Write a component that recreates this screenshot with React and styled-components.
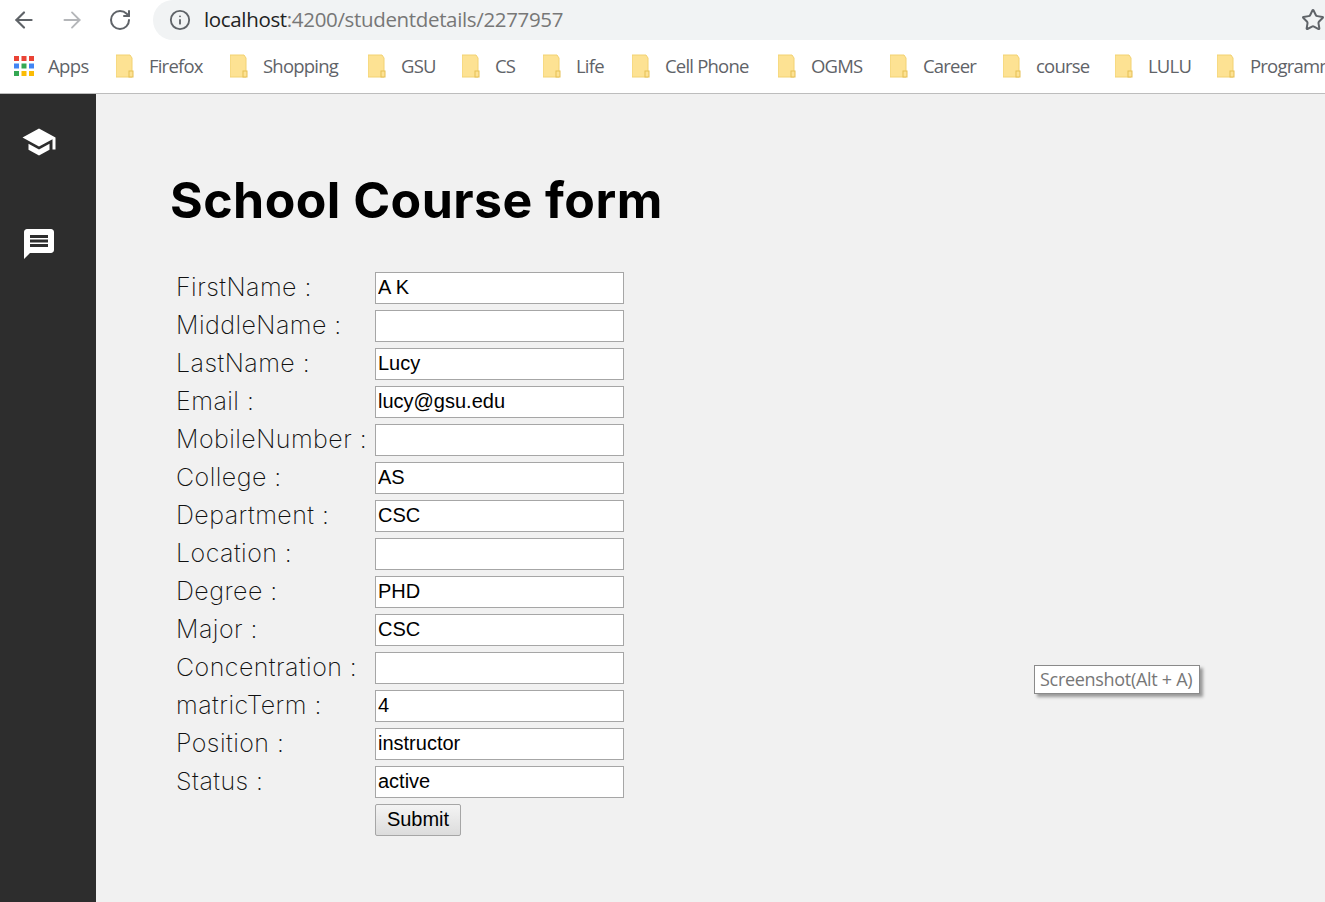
// Libs
import React from 'react';
import styled, { createGlobalStyle } from 'styled-components';
import { ArrowLeft, ArrowRight, RotateCw, Info, Star } from 'lucide-react';

// Styles
const GlobalStyle = createGlobalStyle`
  html, body {
    margin: 0;
    height: 100%;
    overflow: hidden;
    background: #f1f1f1;
  }
`;

const Page = styled.div`
  display: flex;
  flex-direction: column;
  height: 902px;
  overflow: hidden;
`;

const Toolbar = styled.div`
  display: flex;
  align-items: center;
  flex: none;
  height: 40px;
  padding-left: 11px;
  background: #fff;
`;

const NavButton = styled.div`
  display: flex;
  flex: none;
  width: 26px;
  justify-content: center;
  margin-right: 22px;
  color: ${(p) => p.$color};
`;

const AddressBar = styled.div`
  display: flex;
  align-items: center;
  flex: 1;
  height: 40px;
  margin-left: -2px;
  padding-left: 16px;
  border-radius: 20px 0 0 20px;
  background: #f1f3f4;
  color: #5f6368;
`;

const Url = styled.div`
  margin: 0 0 2px 13px;
  font: 400 20.5px 'Open Sans', sans-serif;
  letter-spacing: -0.34px;
  color: #777;

  b {
    font-weight: 400;
    color: #222;
  }
`;

const StarIcon = styled(Star)`
  margin-left: auto;
`;

const BookmarkBar = styled.div`
  display: flex;
  align-items: center;
  flex: none;
  height: 54px;
  padding: 0 0 2px 14px;
  box-sizing: border-box;
  border-bottom: 1px solid #bdbdbd;
  background: #fff;
  overflow: hidden;
`;

const AppsGrid = styled.svg`
  flex: none;
  width: 20px;
  height: 20px;
  margin-right: 14px;
`;

const AppsLabel = styled.span`
  width: 68px;
  flex: none;
  font: 400 18.5px 'Open Sans', sans-serif;
  letter-spacing: -0.6px;
  color: #5f6368;
`;

const Bookmark = styled.div`
  display: flex;
  align-items: center;
  flex: none;
  width: ${(p) => p.$width}px;
  font: 400 18.5px 'Open Sans', sans-serif;
  letter-spacing: -0.8px;
  color: #5f6368;
  white-space: nowrap;
`;

const FolderIcon = styled.svg`
  flex: none;
  width: 18px;
  height: 24px;
  margin-right: 15px;
`;

const Body = styled.div`
  position: relative;
  display: flex;
  flex: 1;
  min-height: 0;
`;

const Sidebar = styled.nav`
  display: flex;
  flex-direction: column;
  align-items: center;
  gap: 66px;
  flex: none;
  box-sizing: border-box;
  width: 96px;
  padding: 30px 18px 0 0;
  background: #2d2d2d;
`;

const SideIcon = styled.svg`
  display: block;
  width: 36px;
  height: 36px;
  fill: #fff;
`;

const Main = styled.main`
  flex: 1;
  padding: 78px 0 0 75px;
  background: #f1f1f1;
`;

const Title = styled.h1`
  margin: 0 0 44px -1px;
  font: 700 50px/56px Inter, sans-serif;
  letter-spacing: 0.45px;
  color: #000;
`;

const Form = styled.form`
  display: grid;
  grid-template-columns: 199px 249px;
  row-gap: 6px;
  align-items: center;
  padding-left: 5px;
`;

const Label = styled.label`
  padding-bottom: 2px;
  font: 200 25px Inter, sans-serif;
  letter-spacing: 0.45px;
  color: #111;
  white-space: nowrap;
`;

const Input = styled.input`
  box-sizing: border-box;
  width: 249px;
  height: 32px;
  margin: 0;
  padding: 0 2px 2px;
  border: 1px solid #a6a6a6;
  border-radius: 0;
  outline: none;
  background: #fff;
  font: 400 20px 'Liberation Sans', sans-serif;
  color: #000;
`;

const SubmitButton = styled.button`
  grid-column: 2;
  box-sizing: border-box;
  width: 86px;
  height: 32px;
  padding: 0 0 2px;
  border: 1px solid #a6a6a6;
  border-radius: 2px;
  background: linear-gradient(180deg, #f4f4f4 0%, #dcdcdc 100%);
  font: 400 20px 'Liberation Sans', sans-serif;
  color: #000;
`;

const Tooltip = styled.div`
  position: absolute;
  left: 1034px;
  top: 571px;
  box-sizing: border-box;
  width: 166px;
  height: 29px;
  padding-left: 5px;
  border: 1px solid #8a8a8a;
  background: #fff;
  box-shadow: 3px 3px 3px #999;
  font: 400 18px/27px 'Open Sans', sans-serif;
  letter-spacing: -0.3px;
  white-space: nowrap;
  color: #777;
`;

const BOOKMARKS = [
  ['Firefox', 114],
  ['Shopping', 138],
  ['GSU', 94],
  ['CS', 81],
  ['Life', 89],
  ['Cell Phone', 146],
  ['OGMS', 112],
  ['Career', 113],
  ['course', 112],
  ['LULU', 102],
  ['Programming', 160],
];

const FIELDS = [
  ['FirstName :', 'A K'],
  ['MiddleName :', ''],
  ['LastName :', 'Lucy'],
  ['Email :', 'lucy@gsu.edu'],
  ['MobileNumber :', ''],
  ['College :', 'AS'],
  ['Department :', 'CSC'],
  ['Location :', ''],
  ['Degree :', 'PHD'],
  ['Major :', 'CSC'],
  ['Concentration :', ''],
  ['matricTerm :', '4'],
  ['Position :', 'instructor'],
  ['Status :', 'active'],
];

const APP_DOTS = ['#ea4335', '#ea4335', '#ea4335', '#4285f4', '#34a853', '#4285f4', '#34a853', '#fbbc05', '#fbbc05'];

const Folder = () => (
  <FolderIcon viewBox="0 0 18 24">
    <path d="M0 1h14l2 3v19H0z" fill="#fde293" stroke="#f2d272" strokeWidth="1" />
    <rect x="13" y="17" width="4" height="6" fill="#fde293" stroke="#e6bf55" strokeWidth="1" />
  </FolderIcon>
);

const App = () => (
  <Page>
    <GlobalStyle />
    <Toolbar>
      <NavButton $color="#5f6368"><ArrowLeft size={26} strokeWidth={2} /></NavButton>
      <NavButton $color="#b4b6b9"><ArrowRight size={26} strokeWidth={1.7} /></NavButton>
      <NavButton $color="#5f6368"><RotateCw size={24} strokeWidth={2} /></NavButton>
      <AddressBar>
        <Info size={22} strokeWidth={2} />
        <Url><b>localhost</b>:4200/studentdetails/2277957</Url>
        <StarIcon size={24} strokeWidth={2} />
      </AddressBar>
    </Toolbar>
    <BookmarkBar>
      <AppsGrid viewBox="0 0 20 20">
        {APP_DOTS.map((color, i) => (
          <rect key={i} x={(i % 3) * 7.5} y={Math.floor(i / 3) * 7.5} width="5" height="5" fill={color} />
        ))}
      </AppsGrid>
      <AppsLabel>Apps</AppsLabel>
      {BOOKMARKS.map(([name, width]) => (
        <Bookmark key={name} $width={width}>
          <Folder />
          {name}
        </Bookmark>
      ))}
    </BookmarkBar>
    <Body>
      <Sidebar>
        <SideIcon viewBox="0 0 24 24">
          <path d="M5 13.18v4L12 21l7-3.82v-4L12 17l-7-3.82zM12 3L1 9l11 6 9-4.91V17h2V9L12 3z" />
        </SideIcon>
        <SideIcon viewBox="0 0 24 24">
          <path d="M20 2H4c-1.1 0-1.99.9-1.99 2L2 22l4-4h14c1.1 0 2-.9 2-2V4c0-1.1-.9-2-2-2zm-2 12H6v-2h12v2zm0-3H6V9h12v2zm0-3H6V6h12v2z" />
        </SideIcon>
      </Sidebar>
      <Main>
        <Title>School Course form</Title>
        <Form onSubmit={(e) => e.preventDefault()}>
          {FIELDS.map(([label, value]) => (
            <React.Fragment key={label}>
              <Label>{label}</Label>
              <Input defaultValue={value} />
            </React.Fragment>
          ))}
          <SubmitButton type="submit">Submit</SubmitButton>
        </Form>
      </Main>
      <Tooltip>Screenshot(Alt + A)</Tooltip>
    </Body>
  </Page>
);

export default App;
